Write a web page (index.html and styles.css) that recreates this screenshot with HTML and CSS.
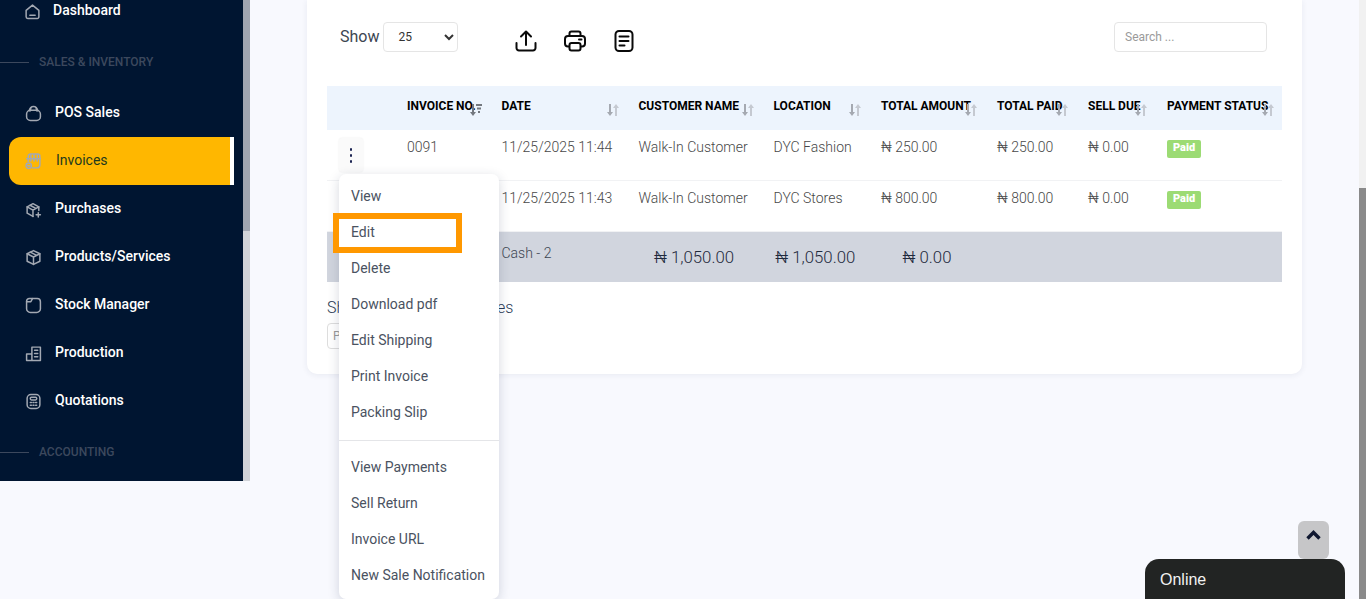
FILE: index.html
```html
<!DOCTYPE html>
<html lang="en">
<head>
    <meta charset="UTF-8">
    <meta name="viewport" content="width=device-width, initial-scale=1.0">
    <title>Invoices</title>
    <link rel="stylesheet" href="styles.css">
</head>
<body>
    <div class="page">
        <aside class="sidebar">
            <nav class="side-nav">
                <a class="nav-item nav-first">
                    <svg class="nav-icon" viewBox="0 0 16 16"><path d="M2 7l6-5 6 5v6a1.500 1.500 0 0 1-1.500 1.500h-9A1.500 1.500 0 0 1 2 13z"/><path d="M5.500 11.500h5"/></svg>
                    <span>Dashboard</span>
                </a>
                <div class="nav-section"><span class="nav-line"></span><span>SALES &amp; INVENTORY</span></div>
                <a class="nav-item">
                    <svg class="nav-icon" viewBox="0 0 16 16"><rect x="1.500" y="5" width="13" height="9.500" rx="3.500"/><path d="M4 5.500C4.500 3 6 1.500 8 1.500s3.500 1.500 4 4"/><path d="M5.500 2.500l-.5 3M10.500 2.500l.5 3"/></svg>
                    <span>POS Sales</span>
                </a>
                <a class="nav-item active">
                    <svg class="nav-icon" viewBox="0 0 16 16"><path d="M3 8V3a2 2 0 0 1 2-2h7a2 2 0 0 1 2 2v8a3 3 0 0 1-3 3H7"/><path d="M1.500 5.500h13M5.500 1.500v6M8.500 1.500v6M11.500 1.500v6"/><circle cx="3.500" cy="12" r="2.500"/><path d="M2.500 12h2"/></svg>
                    <span>Invoices</span>
                </a>
                <a class="nav-item">
                    <svg class="nav-icon" viewBox="0 0 16 16"><path d="M7.500 14.500L2 11.500v-6l5.500-3 5.500 3v3.500"/><path d="M2 5.500l5.500 3 5.500-3M7.500 8.500v6M4.700 4l5.500 3"/><path d="M12.500 11v4M10.500 13h4"/></svg>
                    <span>Purchases</span>
                </a>
                <a class="nav-item">
                    <svg class="nav-icon" viewBox="0 0 16 16"><path d="M8 1.500l6 3v7l-6 3-6-3v-7z"/><path d="M2 4.500l6 3 6-3M8 7.500v7M5 3l6 3"/></svg>
                    <span>Products/Services</span>
                </a>
                <a class="nav-item">
                    <svg class="nav-icon" viewBox="0 0 16 16"><path d="M1.500 4a2.500 2.500 0 0 1 2.500-2.500h7.500a3 3 0 0 1 3 3V11a3.500 3.500 0 0 1-3.500 3.500H5A3.500 3.500 0 0 1 1.500 11z"/><path d="M1.500 4.500h4l1.500-3"/></svg>
                    <span>Stock Manager</span>
                </a>
                <a class="nav-item">
                    <svg class="nav-icon" viewBox="0 0 16 16"><path d="M1.500 14.500V8.500h5M6.500 14.500V2h8v12.500zM1.500 14.500h13"/><path d="M9 5h3M9 8h3M9 11h3"/></svg>
                    <span>Production</span>
                </a>
                <a class="nav-item">
                    <svg class="nav-icon" viewBox="0 0 16 16"><rect x="2" y="1.500" width="12" height="13" rx="3.500"/><rect x="5" y="4" width="6" height="2.500" rx="1"/><path d="M5 9h1M7.500 9h1M10 9h1M5 11.500h1M7.500 11.500h1M10 11.500h1"/></svg>
                    <span>Quotations</span>
                </a>
                <div class="nav-section"><span class="nav-line"></span><span>ACCOUNTING</span></div>
            </nav>
            <div class="side-scroll"><div class="side-thumb"></div></div>
        </aside>

        <main class="main">
            <section class="card">
                <div class="toolbar">
                    <label class="show-box">
                        <span class="show-label">Show</span>
                        <select class="show-select"><option>25</option></select>
                    </label>
                    <div class="tool-icons">
                        <svg class="tool-icon" viewBox="0 0 24 24"><path d="M2.500 14v5a2.500 2.500 0 0 0 2.500 2.500h14a2.500 2.500 0 0 0 2.500-2.500v-5"/><path d="M12 16V3M7 7.500L12 2.500l5 5"/></svg>
                        <svg class="tool-icon" viewBox="0 0 24 24"><path d="M6.500 7V4.500a2 2 0 0 1 2-2h7a2 2 0 0 1 2 2V7"/><path d="M6 17.500H5a3 3 0 0 1-3-3V10a3 3 0 0 1 3-3h14a3 3 0 0 1 3 3v4.500a3 3 0 0 1-3 3h-1"/><rect x="6.500" y="14" width="11" height="7.500" rx="2"/><path d="M16 10.500h2.500"/></svg>
                        <svg class="tool-icon" viewBox="0 0 24 24"><rect x="3.500" y="2" width="17" height="20" rx="3.500"/><path d="M7.500 7.500h9M7.500 12h9M7.500 16.500h5"/></svg>
                    </div>
                    <input class="search-input" type="text" placeholder="Search ...">
                </div>

                <table class="data-table">
                    <colgroup>
                        <col class="col-action"><col class="col-invoice"><col class="col-date"><col class="col-customer"><col class="col-location"><col class="col-amount"><col class="col-paid"><col class="col-due"><col class="col-status">
                    </colgroup>
                    <thead>
                        <tr>
                            <th></th>
                            <th>INVOICE NO.<svg class="sort-icon sorted" viewBox="0 0 12 14"><path d="M2 1h2v8h2l-3 4-3-4h2z"/><path d="M6 1h6v2H6zM7 4.500h4v2H7zM8 8h2v2H8z"/></svg></th>
                            <th>DATE<svg class="sort-icon" viewBox="0 0 12 14"><path class="arrow-down" d="M2 1h2v8h2l-3 4-3-4h2z"/><path d="M8 13h2V5h2L9 1 6 5h2z"/></svg></th>
                            <th>CUSTOMER NAME<svg class="sort-icon" viewBox="0 0 12 14"><path class="arrow-down" d="M2 1h2v8h2l-3 4-3-4h2z"/><path d="M8 13h2V5h2L9 1 6 5h2z"/></svg></th>
                            <th>LOCATION<svg class="sort-icon" viewBox="0 0 12 14"><path class="arrow-down" d="M2 1h2v8h2l-3 4-3-4h2z"/><path d="M8 13h2V5h2L9 1 6 5h2z"/></svg></th>
                            <th>TOTAL AMOUNT<svg class="sort-icon" viewBox="0 0 12 14"><path class="arrow-down" d="M2 1h2v8h2l-3 4-3-4h2z"/><path d="M8 13h2V5h2L9 1 6 5h2z"/></svg></th>
                            <th>TOTAL PAID<svg class="sort-icon" viewBox="0 0 12 14"><path class="arrow-down" d="M2 1h2v8h2l-3 4-3-4h2z"/><path d="M8 13h2V5h2L9 1 6 5h2z"/></svg></th>
                            <th>SELL DUE<svg class="sort-icon" viewBox="0 0 12 14"><path class="arrow-down" d="M2 1h2v8h2l-3 4-3-4h2z"/><path d="M8 13h2V5h2L9 1 6 5h2z"/></svg></th>
                            <th>PAYMENT STATUS<svg class="sort-icon" viewBox="0 0 12 14"><path class="arrow-down" d="M2 1h2v8h2l-3 4-3-4h2z"/><path d="M8 13h2V5h2L9 1 6 5h2z"/></svg></th>
                        </tr>
                    </thead>
                    <tbody>
                        <tr>
                            <td class="action-cell">
                                <div class="action-wrap">
                                    <button class="dots-btn"><span></span><span></span><span></span></button>
                                    <div class="dropdown">
                                        <a class="drop-item">View</a>
                                        <a class="drop-item">Edit</a>
                                        <a class="drop-item">Delete</a>
                                        <a class="drop-item">Download pdf</a>
                                        <a class="drop-item">Edit Shipping</a>
                                        <a class="drop-item">Print Invoice</a>
                                        <a class="drop-item">Packing Slip</a>
                                        <div class="drop-divider"></div>
                                        <a class="drop-item">View Payments</a>
                                        <a class="drop-item">Sell Return</a>
                                        <a class="drop-item">Invoice URL</a>
                                        <a class="drop-item">New Sale Notification</a>
                                    </div>
                                    <div class="edit-mark"></div>
                                </div>
                            </td>
                            <td>0091</td>
                            <td>11/25/2025 11:44</td>
                            <td>Walk-In Customer</td>
                            <td>DYC Fashion</td>
                            <td>₦ 250.00</td>
                            <td>₦ 250.00</td>
                            <td>₦ 0.00</td>
                            <td><span class="badge-paid">Paid</span></td>
                        </tr>
                        <tr class="row-last">
                            <td></td>
                            <td>0090</td>
                            <td>11/25/2025 11:43</td>
                            <td>Walk-In Customer</td>
                            <td>DYC Stores</td>
                            <td>₦ 800.00</td>
                            <td>₦ 800.00</td>
                            <td>₦ 0.00</td>
                            <td><span class="badge-paid">Paid</span></td>
                        </tr>
                    </tbody>
                    <tfoot>
                        <tr>
                            <td colspan="2"></td>
                            <td>Cash - 2</td>
                            <td class="foot-amount">₦ 1,050.00</td>
                            <td class="foot-amount">₦ 1,050.00</td>
                            <td class="foot-amount">₦ 0.00</td>
                            <td colspan="3"></td>
                        </tr>
                    </tfoot>
                </table>

                <p class="entries">Showing 1 to 2 of 2 entries</p>
                <div class="pager"><a class="pager-btn">Previous</a></div>
            </section>
        </main>

        <div class="page-scroll"><div class="page-thumb"></div></div>
    </div>

    <button class="to-top">
        <svg viewBox="0 0 16 12"><path d="M2 9.500L8 3.500l6 6"/></svg>
    </button>
    <div class="chat-box">Online</div>
</body>
</html>
```
FILE: styles.css
```css
* {
    box-sizing: border-box;
}
html, body {
    height: 100%;
}
body {
    margin: 0;
    overflow: hidden;
    background-color: #f8f9fe;
    font-family: Roboto, "Liberation Sans", sans-serif;
    font-size: 14px;
}
.page {
    display: flex;
    height: 100vh;
}

/* sidebar */
.sidebar {
    display: flex;
    flex: 0 0 250px;
    height: 481px;
    background-color: #001531;
    overflow: hidden;
}
.side-nav {
    flex: 1;
    margin-top: -13px;
    padding-left: 9px;
    min-width: 0;
}
.nav-item {
    display: flex;
    align-items: center;
    gap: 13px;
    width: 225px;
    height: 48px;
    padding-left: 16px;
    color: #fff;
    font-weight: 500;
    border-radius: 12px 0 0 12px;
}
.nav-item span {
    margin-top: -2px;
}
.nav-first {
    gap: 12px;
    padding-left: 15px;
}
.nav-item.active {
    background-color: #ffb700;
    border-right: 4px solid #fff;
    color: #1e3a1e;
    font-weight: 400;
}
.nav-item.active span {
    margin-left: 1px;
}
.nav-icon {
    width: 17px;
    height: 17px;
    flex: none;
    fill: none;
    stroke: #a3a9b3;
    stroke-width: 1.400;
    stroke-linecap: round;
    stroke-linejoin: round;
}
.nav-section {
    display: flex;
    align-items: center;
    gap: 10px;
    height: 54px;
    margin-left: -9px;
    color: #3c485d;
    font-size: 12px;
    font-weight: 500;
}
.nav-line {
    width: 29px;
    height: 1px;
    background-color: #3c485d;
}
.side-scroll {
    flex: 0 0 7px;
    background-color: #d1d3d8;
}
.side-thumb {
    height: 231px;
    background-color: #a0a5b0;
}

/* main area */
.main {
    flex: 1;
    min-width: 0;
    padding: 0 57px;
}
.card {
    height: 374px;
    padding: 22px 20px 0;
    background-color: #fff;
    border-radius: 0 0 10px 10px;
    box-shadow: 0 1px 6px rgba(40, 50, 90, 0.08);
}
.toolbar {
    display: flex;
    align-items: center;
    height: 30px;
    margin-bottom: 34px;
}
.show-box {
    display: flex;
    align-items: center;
    gap: 4px;
    margin-left: 13px;
}
.show-label {
    margin-top: -2px;
    color: #3d4652;
    font-size: 16px;
}
.show-select {
    width: 75px;
    height: 30px;
    padding-left: 10px;
    background-color: #fff;
    border: 1px solid #e5e5e5;
    border-radius: 4px;
    color: #333;
    font-family: Roboto, sans-serif;
    font-size: 12px;
}
.tool-icons {
    display: flex;
    gap: 25px;
    margin-top: 8px;
    margin-left: 56px;
}
.tool-icon {
    width: 24px;
    height: 24px;
    fill: none;
    stroke: #0a0a0a;
    stroke-width: 2;
    stroke-linecap: round;
    stroke-linejoin: round;
}
.search-input {
    width: 153px;
    height: 30px;
    margin-left: auto;
    margin-right: 15px;
    padding: 0 10px;
    border: 1px solid #e5e5e5;
    border-radius: 4px;
    font-family: Roboto, sans-serif;
    font-size: 12px;
}
.search-input::placeholder {
    color: #9a9a9a;
}

/* table */
.data-table {
    width: 955px;
    table-layout: fixed;
    border-collapse: collapse;
}
.col-action { width: 68px; }
.col-invoice { width: 94.500px; }
.col-date { width: 137px; }
.col-customer { width: 135px; }
.col-location { width: 107.500px; }
.col-amount { width: 116px; }
.col-paid { width: 91px; }
.col-due { width: 79px; }
.col-status { width: 127px; }
.data-table th {
    position: relative;
    height: 44px;
    padding: 12px 0 0 12px;
    background-color: #edf4fd;
    color: #000;
    font-size: 12px;
    font-weight: 700;
    line-height: 16px;
    text-align: left;
    vertical-align: top;
    white-space: nowrap;
}
.data-table tbody td {
    height: 50px;
    padding: 7px 0 0 12px;
    border-bottom: 1px solid #f1f2f4;
    color: #484848;
    font-weight: 300;
    line-height: 20px;
    vertical-align: top;
    white-space: nowrap;
}
.data-table tbody .row-last td {
    height: 51px;
}
.data-table tbody .action-cell {
    padding-top: 8px;
}
.sort-icon {
    position: absolute;
    right: 8px;
    top: 17px;
    width: 12px;
    height: 14px;
    fill: #c5c9d1;
}
.sort-icon .arrow-down {
    fill: #a5a9b1;
}
.sort-icon.sorted {
    fill: #74787f;
}
.action-wrap {
    position: relative;
}
.dots-btn {
    display: flex;
    flex-direction: column;
    align-items: center;
    justify-content: center;
    gap: 3px;
    width: 24px;
    height: 34px;
    padding: 0;
    background-color: #fafafa;
    border: none;
    border-radius: 3px;
    box-shadow: 0 0 2px rgba(0, 0, 0, 0.08);
}
.dots-btn span {
    width: 2px;
    height: 3px;
    background-color: #1c2452;
    border-radius: 1px;
}
.dropdown {
    position: absolute;
    left: 0;
    top: 36px;
    z-index: 5;
    width: 160px;
    padding: 4px 0 6px;
    background-color: #fff;
    border-radius: 7px;
    box-shadow: 0 3px 12px rgba(30, 40, 70, 0.18);
}
.drop-item {
    display: block;
    height: 36px;
    padding: 0 12px;
    color: #4a5261;
    font-weight: 400;
    line-height: 36px;
}
.drop-divider {
    height: 1px;
    margin: 10px 0 8px;
    background-color: #e4e5e8;
}
.edit-mark {
    position: absolute;
    left: -6px;
    top: 75px;
    z-index: 6;
    width: 129px;
    height: 40px;
    border: 6px solid #ff9800;
}
.badge-paid {
    display: inline-block;
    height: 18px;
    padding: 0 6px;
    margin-top: 3px;
    background-color: #9cdb74;
    border-radius: 2px;
    color: #fff;
    font-size: 11px;
    font-weight: 900;
    line-height: 16px;
    vertical-align: top;
}
.data-table tfoot td {
    height: 50px;
    padding: 11px 0 0 12px;
    background-color: #d1d5de;
    color: #3d4652;
    font-weight: 300;
    line-height: 20px;
    vertical-align: top;
}
.data-table tfoot .foot-amount {
    padding: 0;
    color: #1f2a3d;
    font-size: 16.800px;
    line-height: 50px;
    text-align: center;
    white-space: nowrap;
}
.entries {
    margin: 14px 0 0;
    color: #2b3a55;
    font-size: 16px;
    font-weight: 300;
    line-height: 24px;
}
.pager {
    display: flex;
    margin-top: 3px;
}
.pager-btn {
    height: 26px;
    padding: 0 5px;
    background-color: #fff;
    border: 1px solid #ddd;
    border-radius: 4px;
    color: #999;
    font-size: 12px;
    line-height: 24px;
}

/* page scrollbar */
.page-scroll {
    flex: 0 0 7px;
    background-color: #f1f1f1;
}
.page-thumb {
    height: 411px;
    margin-top: 188px;
    background-color: #8a8a8a;
}

/* floating bits */
.to-top {
    position: fixed;
    left: 1298px;
    top: 521px;
    width: 31px;
    height: 38px;
    padding: 0 0 8px;
    background-color: #c6c6c8;
    border: none;
    border-radius: 6px;
}
.to-top svg {
    width: 17px;
    height: 12px;
    fill: none;
    stroke: #0f1730;
    stroke-width: 3.400;
}
.chat-box {
    position: fixed;
    left: 1145px;
    bottom: 0;
    width: 200px;
    height: 40px;
    padding: 12px 15px 0;
    background-color: #222423;
    border-radius: 14px 14px 0 0;
    color: #f2f2f2;
    font-family: "Liberation Sans", Arial, sans-serif;
    font-size: 16px;
    line-height: 18px;
}
```
